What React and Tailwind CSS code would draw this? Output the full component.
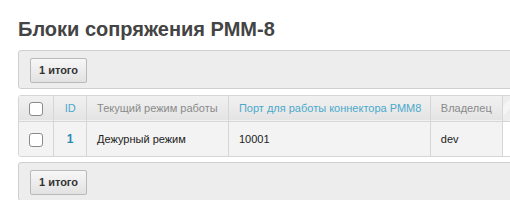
const rows = [{ id: 1, mode: "Дежурный режим", port: "10001", owner: "dev" }];

const Checkbox = () => (
  <span className="inline-block w-[14px] h-[14px] rounded-[3px] border border-[#8a8a8a] bg-white align-middle" />
);

const TotalBar = () => (
  <div className="h-[39px] w-[600px] rounded-[3px] border border-[#cfcfcf] bg-[#ededed] pl-[11px] pt-[6px]">
    <button className="h-[25px] w-[57px] rounded-[2px] border border-[#b9b9b9] bg-gradient-to-b from-[#f7f7f7] to-[#e2e2e2] text-[11px] font-bold text-[#333]">
      1 итого
    </button>
  </div>
);

const stripes =
  "bg-[repeating-linear-gradient(-45deg,#f5f5f5_0px,#f5f5f5_7px,#ededed_7px,#ededed_14px)]";

export default function App() {
  return (
    <div className="w-[510px] h-[200px] overflow-hidden bg-white pl-[18px] font-['Liberation_Sans',Arial,sans-serif]">
      <h1 className="pt-[18px] h-[50px] text-[20px] font-bold leading-[22px] text-[#444]">
        Блоки сопряжения РММ-8
      </h1>
      <TotalBar />
      <div className="mt-[6px] w-[600px] rounded-[3px] border border-[#d6d6d6] overflow-hidden">
        <table className="table-fixed border-collapse whitespace-nowrap text-[11px]">
          <thead>
            <tr className="h-[25px] bg-gradient-to-b from-[#f1f1f1] to-[#e4e4e4] border-b border-[#d6d6d6]">
              <th className="w-[35px] border-r border-[#d6d6d6] p-0 text-center font-normal">
                <Checkbox />
              </th>
              <th className="w-[33px] border-r border-[#d6d6d6] p-0 text-center font-normal text-[#4aa9cc]">
                ID
              </th>
              <th className="w-[142px] border-r border-[#d6d6d6] pl-[10px] text-left font-normal text-[#8a8a8a]">
                Текущий режим работы
              </th>
              <th className="w-[202px] border-r border-[#d6d6d6] pl-[10px] text-left font-normal text-[#4aa9cc]">
                Порт для работы коннектора РММ8
              </th>
              <th className="w-[72px] border-r border-[#d6d6d6] pl-[10px] text-left font-normal text-[#8a8a8a]">
                Владелец
              </th>
              <th rowSpan={2} className={`w-[116px] p-0 ${stripes}`} />
            </tr>
          </thead>
          <tbody>
            {rows.map((r) => (
              <tr key={r.id} className="h-[35px] bg-[#f3f3f3]">
                <td className="border-r border-[#d6d6d6] p-0 text-center">
                  <Checkbox />
                </td>
                <td className="border-r border-[#d6d6d6] p-0 text-center text-[12px] font-bold text-[#2a8ab4]">
                  {r.id}
                </td>
                <td className="border-r border-[#d6d6d6] pl-[10px] text-[#222]">{r.mode}</td>
                <td className="border-r border-[#d6d6d6] pl-[10px] text-[#222]">{r.port}</td>
                <td className="border-r border-[#d6d6d6] pl-[10px] text-[#222]">{r.owner}</td>
              </tr>
            ))}
          </tbody>
        </table>
      </div>
      <div className="mt-[5px]">
        <TotalBar />
      </div>
    </div>
  );
}
